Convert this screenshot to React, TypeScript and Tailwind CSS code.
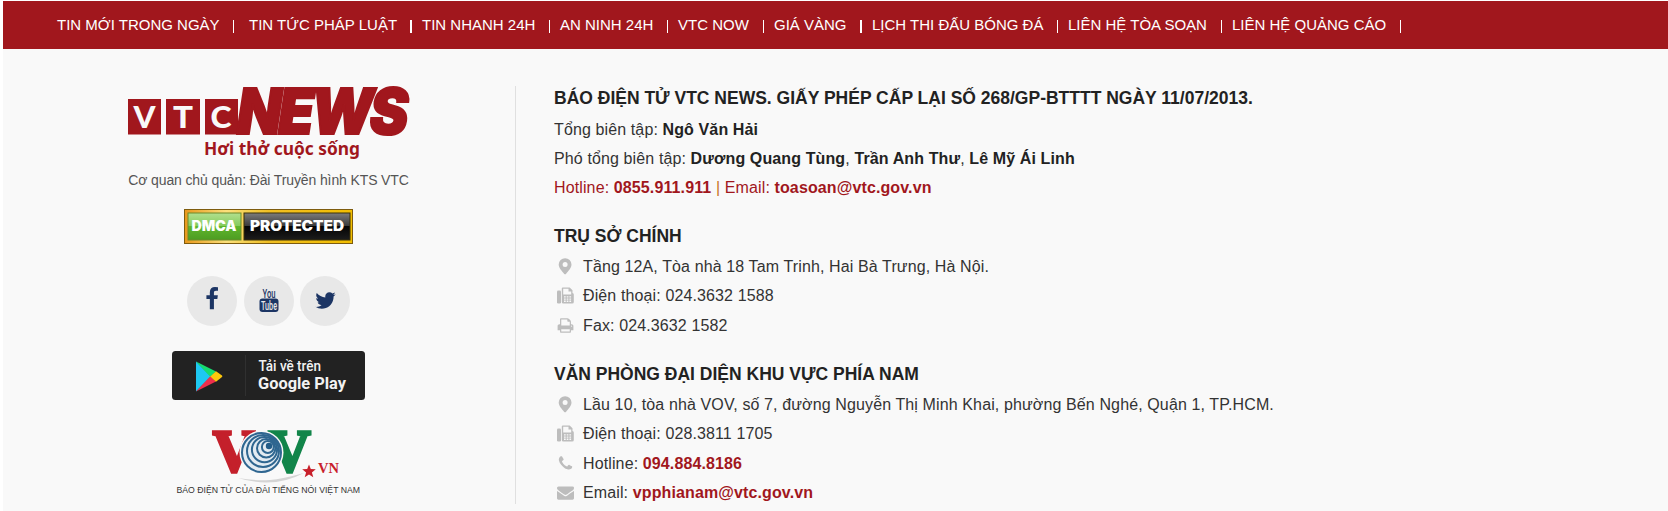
import React from "react";

const navItems = [
  { label: "TIN MỚI TRONG NGÀY", cell: "w-[192px]", bar: "w-px mr-[15px]" },
  { label: "TIN TỨC PHÁP LUẬT", cell: "w-[173px]", bar: "w-0.5 mr-[10px]" },
  { label: "TIN NHANH 24H", cell: "w-[138px]", bar: "w-px mr-[10px]" },
  { label: "AN NINH 24H", cell: "w-[118px]", bar: "w-px mr-[10px]" },
  { label: "VTC NOW", cell: "w-[96px]", bar: "w-px mr-[10px]" },
  { label: "GIÁ VÀNG", cell: "w-[98px]", bar: "w-0.5 mr-[10px]" },
  { label: "LỊCH THI ĐẤU BÓNG ĐÁ", cell: "w-[196px]", bar: "w-px mr-[10px]" },
  { label: "LIÊN HỆ TÒA SOẠN", cell: "w-[164px]", bar: "w-px mr-[10px]" },
  { label: "LIÊN HỆ QUẢNG CÁO", cell: "w-[179px]", bar: "w-px mr-[10px]" },
];

const paths = {
  print:
    "M448 1536h896v-256h-896v256zm0-640h896v-384h-160q-40 0-68-28t-28-68v-160h-640v640zm1152 64q0-26-19-45t-45-19-45 19-19 45 19 45 45 19 45-19 19-45zm128 0v416q0 13-9.5 22.5t-22.5 9.5h-224v160q0 40-28 68t-68 28h-960q-40 0-68-28t-28-68v-160h-224q-13 0-22.5-9.5t-9.5-22.5v-416q0-79 56.5-135.5t135.5-56.5h64v-544q0-40 28-68t68-28h672q40 0 88 20t76 48l152 152q28 28 48 76t20 88v256h64q79 0 135.5 56.5t56.5 135.5z",
  phone:
    "M1600 1240q0 27-10 70.5t-21 68.5q-21 50-122 106-94 51-186 51-27 0-53-3.5t-57.5-12.5-47-14.5-55.5-20.5-49-18q-98-35-175-83-127-79-264-216t-216-264q-48-77-83-175-3-9-18-49t-20.5-55.5-14.5-47-12.5-57.5-3.5-53q0-92 51-186 56-101 106-122 25-11 68.5-21t70.5-10q14 0 21 3 18 6 53 76 11 19 30 54t35 63.5 31 53.5q3 4 17.5 25t21.5 35.5 7 28.5q0 20-28.5 50t-62 55-62 53-28.5 46q0 9 5 22.5t8.5 20.5 14 24 11.5 19q76 137 174 235t235 174q2 1 19 11.5t24 14 20.5 8.5 22.5 5q18 0 46-28.5t53-62 55-62 50-28.5q14 0 28.5 7t35.500 21.500 25 17.500q25 15 53.500 31t63.500 35 54 30q70 35 76 53 3 7 3 21z",
  envelope:
    "M1792 710v794q0 66-47 113t-113 47h-1472q-66 0-113-47t-47-113v-794q44 49 101 87 362 246 497 345 57 42 92.5 65.5t94.5 48 110 24.5h2q51 0 110-24.5t94.5-48 92.5-65.5q170-123 498-345 57-39 100-87zm0-294q0 79-49 151t-122 123q-376 261-468 325-10 7-42.5 31t-54 38.5-52 32.5-57.5 27-50 9h-2q-23 0-50-9t-57.5-27-52-32.5-54-38.5-42.5-31q-91-64-262-182.5t-205-142.5q-62-42-117-115.5t-55-136.5q0-78 41.5-130t118.5-52h1472q65 0 112.5 47t47.5 113z",
  twitter:
    "M1684 408q-67 98-162 167 1 14 1 42 0 130-38 259.5t-115.5 248.5-184.5 210.5-258 146-323 54.5q-271 0-496-145 35 4 78 4 225 0 401-138-105-2-188-64.5t-114-159.5q33 5 61 5 43 0 85-11-112-23-185.5-111.5t-73.5-205.5v-4q68 38 146 41-66-44-105-115t-39-154q0-88 44-163 121 149 294.5 238.5t371.5 99.5q-8-38-8-74 0-134 94.5-228.5t228.5-94.5q140 0 236 102 109-21 205-78-37 115-142 178 93-10 186-50z",
  facebook:
    "M1343 12v264h-157q-86 0-116 36t-30 108v189h293l-39 296h-254v759h-306v-759h-255v-296h255v-218q0-186 104-288.5t277-102.5q147 0 228 12z",
};

function Glyph({ d, className }: { d: string; className: string }) {
  return (
    <svg viewBox="0 0 1792 1792" className={className} fill="currentColor">
      <path d={d} />
    </svg>
  );
}

function MarkerGlyph() {
  return (
    <svg viewBox="0 0 17 17" className="size-[17px]" fill="currentColor">
      <path
        fillRule="evenodd"
        d="M8.100 .2a6.400 6.400 0 0 1 6.400 6.400c0 3.300-3.200 6.700-5.500 9.300q-.9.900-1.800 0C4.900 13.300 1.700 9.900 1.700 6.600A6.400 6.400 0 0 1 8.100.2zm0 3.800a2.500 2.500 0 1 0 0 5 2.500 2.500 0 0 0 0-5z"
      />
    </svg>
  );
}

function FaxGlyph() {
  return (
    <svg viewBox="0 0 17 17" className="size-[17px]" fill="currentColor">
      <rect x="0" y="3.500" width="4" height="13" rx="1.300" />
      <path
        fillRule="evenodd"
        d="M4.800 1.300a1 1 0 0 1 1-.9h6.900L15.500 3.300v2.800a1.600 1.600 0 0 1 1.300 1.500v7.300a1.600 1.600 0 0 1-1.600 1.600H6.400a1.600 1.600 0 0 1-1.600-1.600zM6.200 1.800v5.700h8V4.500h-2.700V1.800zM7 9.200h1.700v1.300H7zm2.700 0h1.700v1.300H9.700zm2.700 0h1.700v1.300h-1.700zM7 11.400h1.700v1.300H7zm2.700 0h1.700v1.300H9.700zm2.700 0h1.700v1.300h-1.700zM7 13.600h1.700v1.300H7zm2.700 0h1.700v1.300H9.700zm2.700 0h1.700v1.300h-1.700z"
      />
    </svg>
  );
}

function VtcLogo() {
  return (
    <svg width="282" height="76" viewBox="0 0 282 76" fill="#a1171d" className="shrink-0 overflow-visible">
      <rect x="0" y="13" width="33" height="35.500" />
      <rect x="38" y="13" width="34" height="35.500" />
      <rect x="77" y="13" width="33" height="35.500" />
      <g fill="#f9f9f9" fontFamily="Lato, sans-serif" fontWeight="900" fontSize="31">
        <text x="5.500" y="42" textLength="22" lengthAdjust="spacingAndGlyphs">V</text>
        <text x="45" y="42" textLength="20" lengthAdjust="spacingAndGlyphs">T</text>
        <text x="82.500" y="42" textLength="21" lengthAdjust="spacingAndGlyphs">C</text>
      </g>
      <text x="109" y="47.800" fontFamily="Inter, sans-serif" fontWeight="900" fontStyle="italic" fontSize="63" letterSpacing="-3.500" stroke="#a1171d" strokeWidth="2.200" textLength="168" lengthAdjust="spacingAndGlyphs">NEWS</text>
      <text x="76" y="69" fontFamily="'Noto Sans', sans-serif" fontWeight="700" fontSize="18.500" textLength="156" lengthAdjust="spacingAndGlyphs">Hơi thở cuộc sống</text>
    </svg>
  );
}

function DmcaBadge() {
  return (
    <svg width="169" height="35" viewBox="0 0 169 35" className="mt-[19px] shrink-0">
      <defs>
        <linearGradient id="gold" x1="0" y1="0" x2="1" y2="0">
          <stop offset="0" stopColor="#e9981c" />
          <stop offset="0.25" stopColor="#fbe07c" />
          <stop offset="0.5" stopColor="#f0bf24" />
          <stop offset="1" stopColor="#f2be00" />
        </linearGradient>
        <linearGradient id="green" x1="0" y1="0" x2="0" y2="1">
          <stop offset="0" stopColor="#b2e08f" />
          <stop offset="0.48" stopColor="#86cb5d" />
          <stop offset="0.5" stopColor="#5fb62c" />
          <stop offset="1" stopColor="#4d9c22" />
        </linearGradient>
        <linearGradient id="black" x1="0" y1="0" x2="0" y2="1">
          <stop offset="0" stopColor="#7d7d7d" />
          <stop offset="0.48" stopColor="#3a3a3a" />
          <stop offset="0.5" stopColor="#050505" />
          <stop offset="1" stopColor="#1c1c1c" />
        </linearGradient>
      </defs>
      <rect x="0.500" y="0.500" width="168" height="34" fill="url(#gold)" stroke="#7e5c0e" />
      <rect x="4" y="4" width="53" height="27" fill="url(#green)" stroke="#6c8a2a" />
      <rect x="60" y="4" width="106" height="27" fill="url(#black)" stroke="#3b3008" />
      <g fill="#fff" fontFamily="Inter, sans-serif" fontWeight="900" fontSize="14">
        <text x="7.500" y="22" textLength="45" lengthAdjust="spacingAndGlyphs">DMCA</text>
        <text x="66" y="22" textLength="94" lengthAdjust="spacingAndGlyphs">PROTECTED</text>
      </g>
    </svg>
  );
}

function PlayBadge() {
  return (
    <svg width="193" height="49" viewBox="0 0 193 49" className="mt-[25px] shrink-0">
      <rect width="193" height="49" rx="3.500" fill="#222" />
      <path d="M73.500 4v41" stroke="#303030" />
      <path d="M24 10.500v30L39 25.500z" fill="#1ec8f2" />
      <path d="M24 10.500L44 20.500 38.500 26z" fill="#16dc70" />
      <path d="M24 40.500L44 30.500 38.500 25z" fill="#ee2f4c" />
      <path d="M44 20.200l6 4.300q.8.800 0 1.600l-6 4.700-5.700-5.300z" fill="#fdc70c" />
      <g fill="#f2f2f2" fontFamily="Roboto, sans-serif">
        <text x="86.500" y="20" fontSize="14" fontWeight="500" textLength="62.500" lengthAdjust="spacingAndGlyphs">Tải về trên</text>
        <text x="86" y="37.500" fontSize="16.500" fontWeight="700" textLength="88" lengthAdjust="spacingAndGlyphs">Google Play</text>
      </g>
    </svg>
  );
}

function VovLogo() {
  return (
    <svg width="186" height="66" viewBox="0 0 186 66" className="mt-[30px] shrink-0 overflow-visible">
      <g fontFamily="'Liberation Serif', serif" fontWeight="700" fontSize="60" strokeWidth="3.500">
        <text x="37" y="41" fill="#c4202b" stroke="#c4202b" textLength="42" lengthAdjust="spacingAndGlyphs">V</text>
        <text x="92.500" y="41" fill="#12854a" stroke="#12854a" textLength="42" lengthAdjust="spacingAndGlyphs">V</text>
      </g>
      <path d="M62 48q36 11 66-5-22 6-34 7-16 1-32-2z" fill="#d4d4d4" />
      <circle cx="85.500" cy="22.500" r="22" fill="#f9f9f9" />
      <circle cx="85.500" cy="22.500" r="20.500" fill="#e3ebf2" />
      <g fill="none" stroke="#2f6690" strokeWidth="2">
        <circle cx="85.500" cy="22.500" r="19.500" />
        <circle cx="87" cy="21" r="16" />
        <circle cx="88.500" cy="19.600" r="12.600" />
        <circle cx="90.200" cy="18.200" r="9.200" />
        <circle cx="91.800" cy="17" r="5.900" />
      </g>
      <circle cx="93" cy="16" r="3.200" fill="#235c88" />
      <path d="M133 34.500l1.800 4.600 5 .2-3.900 3.100 1.400 4.800-4.300-2.700-4.300 2.700 1.400-4.800-3.900-3.100 5-.2z" fill="#c8202b" />
      <text x="142" y="43" fill="#c8202b" fontFamily="'Liberation Serif', serif" fontWeight="700" fontSize="14.500" textLength="21" lengthAdjust="spacingAndGlyphs">VN</text>
      <text x="0.500" y="62.500" fill="#333" fontFamily="'Liberation Sans', sans-serif" fontSize="8.500" textLength="183.500" lengthAdjust="spacingAndGlyphs">BÁO ĐIỆN TỬ CỦA ĐÀI TIẾNG NÓI VIỆT NAM</text>
    </svg>
  );
}

function YoutubeGlyph() {
  return (
    <svg width="20" height="24" viewBox="0 0 20 24" fill="#1c3564" fontFamily="Roboto, sans-serif" className="mb-[3px] overflow-visible">
      <text x="3.500" y="9.700" fontSize="12.500" fontWeight="500" textLength="13" lengthAdjust="spacingAndGlyphs">You</text>
      <rect x="0.500" y="10.500" width="19" height="13.500" rx="3" />
      <text x="2" y="21.800" fontSize="12.500" fontWeight="500" fill="#e8e8e8" textLength="16" lengthAdjust="spacingAndGlyphs">Tube</text>
    </svg>
  );
}

function Circle({ children }: { children: React.ReactNode }) {
  return <a className="flex size-[50px] items-center justify-center rounded-full bg-[#e8e8e8] text-[#1c3564]">{children}</a>;
}

function Heading({ children, className = "" }: { children: React.ReactNode; className?: string }) {
  return <h2 className={`text-[17.5px] leading-6 font-bold tracking-normal text-[#222] ${className}`}>{children}</h2>;
}

function Row({ icon, children }: { icon: React.ReactNode; children: React.ReactNode }) {
  return (
    <li className="flex items-center">
      <span className="flex w-[29px] pl-[3px] text-[#bdbdbd]">{icon}</span>
      <span>{children}</span>
    </li>
  );
}

export default function App() {
  return (
    <div className="h-[511px] overflow-hidden bg-white pt-px pl-[3px] font-['Liberation_Sans',Arial,sans-serif]">
      <nav className="flex h-12 items-center bg-[#a1171d] pl-[54px] text-[15px] text-white">
        {navItems.map((item) => (
          <div key={item.label} className={`flex shrink-0 items-center justify-between whitespace-nowrap ${item.cell}`}>
            <span>{item.label}</span>
            <i className={`mt-[3px] h-[13px] shrink-0 bg-white ${item.bar}`} />
          </div>
        ))}
      </nav>
      <main className="flex h-[462px] bg-[#f9f9f9] pt-[37px]">
        <aside className="flex h-[418px] w-[513px] shrink-0 flex-col items-center border-r border-[#e0e0e0] pl-[19px]">
          <VtcLogo />
          <p className="mt-2 text-sm leading-5 tracking-[-0.12px] whitespace-nowrap text-[#555]">Cơ quan chủ quản: Đài Truyền hình KTS VTC</p>
          <DmcaBadge />
          <div className="mt-8 flex gap-[6.5px]">
            <Circle><Glyph d={paths.facebook} className="mb-1 size-6" /></Circle>
            <Circle><YoutubeGlyph /></Circle>
            <Circle><Glyph d={paths.twitter} className="mb-0.5 size-[23px]" /></Circle>
          </div>
          <PlayBadge />
          <VovLogo />
        </aside>
        <section className="pl-[38px] text-base leading-[29.33px] tracking-[0.12px] text-[#333]">
          <Heading className="mb-[5px]">BÁO ĐIỆN TỬ VTC NEWS. GIẤY PHÉP CẤP LẠI SỐ 268/GP-BTTTT NGÀY 11/07/2013.</Heading>
          <div className="mb-[22px] leading-[29px]">
            <p>Tổng biên tập: <b className="text-[#222]">Ngô Văn Hải</b></p>
            <p>Phó tổng biên tập: <b className="text-[#222]">Dương Quang Tùng</b>, <b className="text-[#222]">Trần Anh Thư</b>, <b className="text-[#222]">Lê Mỹ Ái Linh</b></p>
            <p className="text-[#a1171d]">Hotline: <b>0855.911.911</b> <span className="text-[#c8741c]">|</span> Email: <b>toasoan@vtc.gov.vn</b></p>
          </div>
          <Heading className="mb-1">TRỤ SỞ CHÍNH</Heading>
          <ul>
            <Row icon={<MarkerGlyph />}>Tầng 12A, Tòa nhà 18 Tam Trinh, Hai Bà Trưng, Hà Nội.</Row>
            <Row icon={<FaxGlyph />}>Điện thoại: 024.3632 1588</Row>
            <Row icon={<Glyph d={paths.print} className="size-[17px]" />}>Fax: 024.3632 1582</Row>
          </ul>
          <Heading className="mt-[22px] mb-1">VĂN PHÒNG ĐẠI DIỆN KHU VỰC PHÍA NAM</Heading>
          <ul>
            <Row icon={<MarkerGlyph />}>Lầu 10, tòa nhà VOV, số 7, đường Nguyễn Thị Minh Khai, phường Bến Nghé, Quận 1, TP.HCM.</Row>
            <Row icon={<FaxGlyph />}>Điện thoại: 028.3811 1705</Row>
            <Row icon={<Glyph d={paths.phone} className="size-[17px]" />}>Hotline: <b className="text-[#a1171d]">094.884.8186</b></Row>
            <Row icon={<Glyph d={paths.envelope} className="size-[17px]" />}>Email: <b className="text-[#a1171d]">vpphianam@vtc.gov.vn</b></Row>
          </ul>
        </section>
      </main>
    </div>
  );
}
